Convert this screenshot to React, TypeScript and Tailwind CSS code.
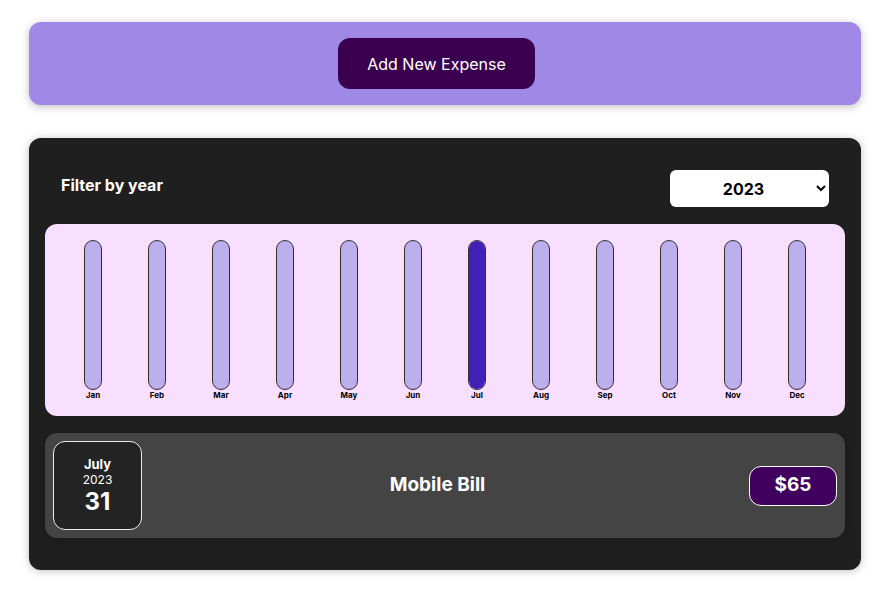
const months = ["Jan", "Feb", "Mar", "Apr", "May", "Jun", "Jul", "Aug", "Sep", "Oct", "Nov", "Dec"];

// values relative to max; only July has an expense
const values = [0, 0, 0, 0, 0, 0, 65, 0, 0, 0, 0, 0];

function ChartBar({ label, value, max }: { label: string; value: number; max: number }) {
  const fill = max > 0 ? Math.round((value / max) * 100) + "%" : "0%";
  return (
    <div className="flex h-full flex-col items-center">
      <div className="flex h-full w-[18px] flex-col justify-end overflow-hidden rounded-xl border border-[#313131] bg-[#bdaeee]">
        <div className="w-full bg-[#4320b5]" style={{ height: fill }} />
      </div>
      <div className="text-[8px] font-bold leading-[10px] text-black">{label}</div>
    </div>
  );
}

export default function App() {
  const max = Math.max(...values);
  return (
    <div className="min-h-[600px] bg-white px-[29px] pt-[22px] font-['Inter',sans-serif]">
      {/* New expense */}
      <div className="flex h-[83px] items-center justify-center rounded-xl bg-[#a088e6] shadow-[0_2px_8px_rgba(0,0,0,0.25)]">
        <button className="mr-[17px] h-[51px] w-[197px] rounded-xl bg-[#3a004f] text-base text-white">
          Add New Expense
        </button>
      </div>

      {/* Expenses */}
      <div className="mt-[33px] rounded-xl bg-[#1f1f1f] px-4 pt-8 pb-8 shadow-[0_1px_8px_rgba(0,0,0,0.25)]">
        <div className="flex items-center justify-between px-4">
          <label className="mb-2 text-base font-bold text-white">Filter by year</label>
          <select
            defaultValue="2023"
            className="h-[37px] w-[159px] rounded-md bg-white px-3 text-base font-bold text-black [text-align-last:center]"
          >
            <option>2023</option>
            <option>2022</option>
            <option>2021</option>
          </select>
        </div>

        <div className="mt-[17px] flex h-[192px] justify-around rounded-xl bg-[#f8dfff] p-4">
          {months.map((m, i) => (
            <ChartBar key={m} label={m} value={values[i]} max={max} />
          ))}
        </div>

        <div className="mt-[17px] flex items-center rounded-xl bg-[#444444] p-2 shadow-[0_1px_8px_rgba(0,0,0,0.25)]">
          <div className="flex h-[89px] w-[89px] flex-col items-center justify-center rounded-xl border border-[#ececec] bg-[#232323] text-white">
            <div className="text-[13px] font-bold leading-4">July</div>
            <div className="text-xs leading-4">2023</div>
            <div className="text-2xl font-bold leading-7">31</div>
          </div>
          <h2 className="ml-2 mr-6 flex-1 text-center text-[19px] font-bold text-white">Mobile Bill</h2>
          <div className="flex h-10 w-[88px] items-center justify-center rounded-xl border border-white bg-[#40005d] text-[19px] font-bold text-white">
            $65
          </div>
        </div>
      </div>
    </div>
  );
}
